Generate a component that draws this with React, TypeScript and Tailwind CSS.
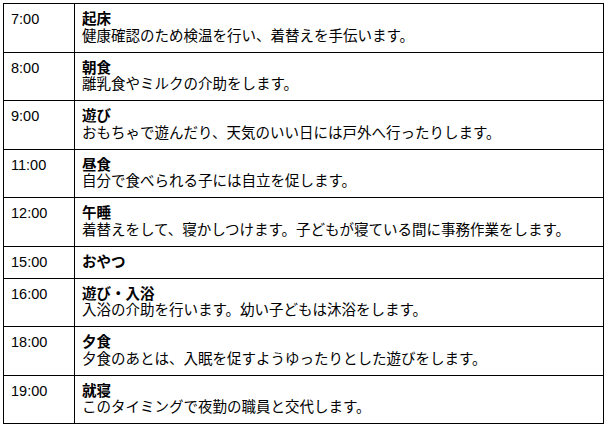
const schedule = [
  { time: "7:00", title: "起床", desc: "健康確認のため検温を行い、着替えを手伝います。" },
  { time: "8:00", title: "朝食", desc: "離乳食やミルクの介助をします。" },
  { time: "9:00", title: "遊び", desc: "おもちゃで遊んだり、天気のいい日には戸外へ行ったりします。" },
  { time: "11:00", title: "昼食", desc: "自分で食べられる子には自立を促します。" },
  { time: "12:00", title: "午睡", desc: "着替えをして、寝かしつけます。子どもが寝ている間に事務作業をします。" },
  { time: "15:00", title: "おやつ", desc: "" },
  { time: "16:00", title: "遊び・入浴", desc: "入浴の介助を行います。幼い子どもは沐浴をします。" },
  { time: "18:00", title: "夕食", desc: "夕食のあとは、入眠を促すようゆったりとした遊びをします。" },
  { time: "19:00", title: "就寝", desc: "このタイミングで夜勤の職員と交代します。" },
];

export default function App() {
  return (
    <div className="min-h-screen bg-white p-[3px]">
      <table
        className="w-[601px] border-collapse text-[14.5px] leading-[16.5px] text-black"
        style={{ fontFamily: '"Liberation Sans", Arial, "Noto Sans CJK JP", sans-serif' }}
      >
        <tbody>
          {schedule.map((row) => (
            <tr key={row.time}>
              <td className="w-[71px] border border-black px-[7px] py-[7.25px] align-top">
                {row.time}
              </td>
              <td className="border border-black px-[7px] py-[7.25px] align-top">
                <div className="font-bold">{row.title}</div>
                {row.desc && <div>{row.desc}</div>}
              </td>
            </tr>
          ))}
        </tbody>
      </table>
    </div>
  );
}
